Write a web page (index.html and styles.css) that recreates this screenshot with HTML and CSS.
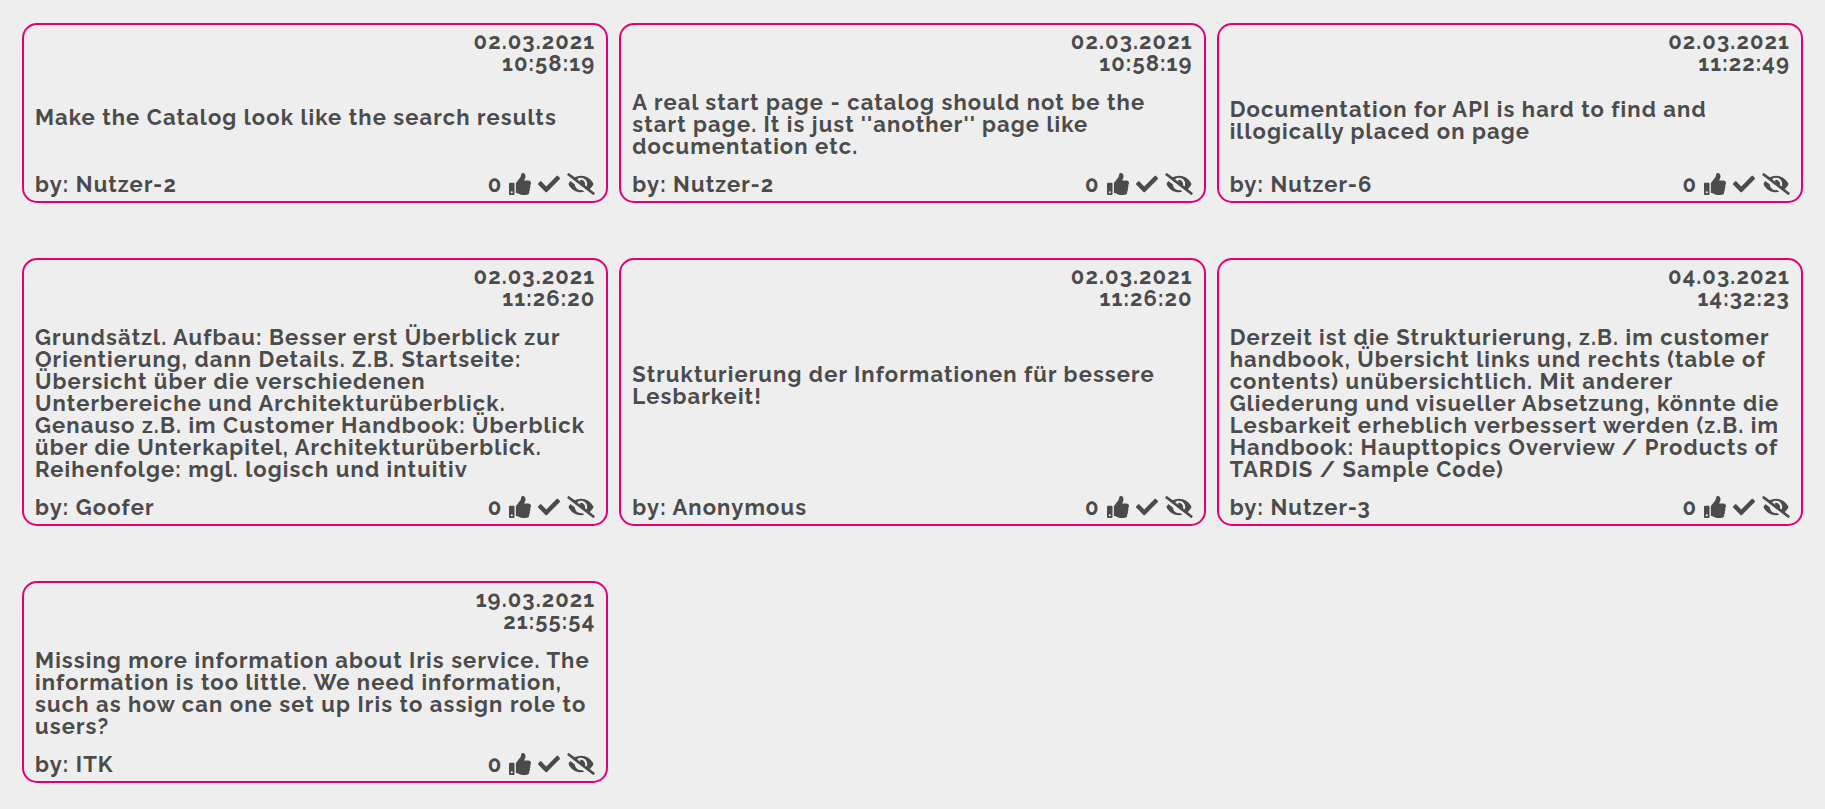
FILE: index.html
```
<!DOCTYPE html>
<html lang="en">
<head>
<meta charset="utf-8">
<title>Feedback</title>
<link rel="stylesheet" href="styles.css">
</head>
<body>
<svg class="sprite" aria-hidden="true">
  <symbol id="thumb" viewBox="0 0 512 512"><path d="M104 224H24c-13.255 0-24 10.745-24 24v240c0 13.255 10.745 24 24 24h80c13.255 0 24-10.745 24-24V248c0-13.255-10.745-24-24-24zM64 472c-13.255 0-24-10.745-24-24s10.745-24 24-24 24 10.745 24 24-10.745 24-24 24zM384 81.452c0 42.416-25.97 66.208-33.277 94.548h101.723c33.397 0 59.397 27.746 59.553 58.098.084 17.938-7.546 37.249-19.439 49.197l-.11.11c9.836 23.337 8.237 56.037-9.308 79.469 8.681 25.895-.069 57.704-16.382 74.757 4.298 17.598 2.244 32.575-6.148 44.632C440.202 511.587 389.616 512 346.839 512l-2.845-.001c-48.287-.017-87.806-17.598-119.56-31.725-15.957-7.099-36.821-15.887-52.651-16.178-6.54-.12-11.783-5.457-11.783-11.998v-213.77c0-3.2 1.282-6.271 3.558-8.521 39.614-39.144 56.648-80.587 89.117-113.111 14.804-14.832 20.188-37.236 25.393-58.902C282.515 39.293 291.817 0 312 0c24 0 72 8 72 81.452z"/></symbol>
  <symbol id="check" viewBox="0 0 512 512"><path d="M173.898 439.404l-166.4-166.4c-9.997-9.997-9.997-26.206 0-36.204l36.203-36.204c9.997-9.998 26.207-9.998 36.204 0L192 312.69 432.095 72.596c9.997-9.997 26.207-9.997 36.204 0l36.203 36.204c9.997 9.997 9.997 26.206 0 36.204l-294.4 294.401c-9.998 9.997-26.207 9.997-36.204-.001z"/></symbol>
  <symbol id="hide" viewBox="0 0 640 512"><path d="M320 400c-75.85 0-137.25-58.71-142.9-133.11L72.2 185.82c-13.79 17.3-26.48 35.59-36.72 55.59a32.35 32.35 0 0 0 0 29.19C89.71 376.41 197.07 448 320 448c26.91 0 52.87-4 77.89-10.46L346 397.39a144.13 144.13 0 0 1-26 2.61zm313.82 58.1l-110.55-85.44a331.25 331.25 0 0 0 81.25-102.07 32.35 32.35 0 0 0 0-29.19C550.29 135.59 442.93 64 320 64a308.15 308.15 0 0 0-147.32 37.7L45.46 3.37A16 16 0 0 0 23 6.18L3.37 31.45A16 16 0 0 0 6.18 53.9l588.36 454.73a16 16 0 0 0 22.46-2.81l19.64-25.27a16 16 0 0 0-2.82-22.45zm-183.72-142l-39.3-30.38A94.75 94.75 0 0 0 416 256a94.76 94.76 0 0 0-121.31-92.21A47.65 47.65 0 0 1 304 192a46.64 46.64 0 0 1-1.54 10l-73.61-56.89A142.31 142.31 0 0 1 320 112a143.92 143.92 0 0 1 144 144c0 21.63-5.29 41.79-13.9 60.11z"/></symbol>
</svg>
<main class="board">
  <article class="card">
    <time class="date">02.03.2021<br>10:58:19</time>
    <p class="text">Make the Catalog look like the search results</p>
    <footer class="foot"><span class="author">by: Nutzer-2</span><span class="votes">0</span><button class="action" aria-label="Like"><svg class="icon"><use href="#thumb"/></svg></button><button class="action" aria-label="Done"><svg class="icon"><use href="#check"/></svg></button><button class="action" aria-label="Hide"><svg class="icon icon-wide"><use href="#hide"/></svg></button></footer>
  </article>
  <article class="card">
    <time class="date">02.03.2021<br>10:58:19</time>
    <p class="text">A real start page - catalog should not be the start page. It is just ''another'' page like documentation etc.</p>
    <footer class="foot"><span class="author">by: Nutzer-2</span><span class="votes">0</span><button class="action" aria-label="Like"><svg class="icon"><use href="#thumb"/></svg></button><button class="action" aria-label="Done"><svg class="icon"><use href="#check"/></svg></button><button class="action" aria-label="Hide"><svg class="icon icon-wide"><use href="#hide"/></svg></button></footer>
  </article>
  <article class="card">
    <time class="date">02.03.2021<br>11:22:49</time>
    <p class="text">Documentation for API is hard to find and illogically placed on page</p>
    <footer class="foot"><span class="author">by: Nutzer-6</span><span class="votes">0</span><button class="action" aria-label="Like"><svg class="icon"><use href="#thumb"/></svg></button><button class="action" aria-label="Done"><svg class="icon"><use href="#check"/></svg></button><button class="action" aria-label="Hide"><svg class="icon icon-wide"><use href="#hide"/></svg></button></footer>
  </article>
  <article class="card">
    <time class="date">02.03.2021<br>11:26:20</time>
    <p class="text" lang="de">Grundsätzl. Aufbau: Besser erst Überblick zur Orientierung, dann Details. Z.B. Startseite: Übersicht über die verschiedenen Unterbereiche und Architekturüberblick. Genauso z.B. im Customer Handbook: Überblick über die Unterkapitel, Architekturüberblick. Reihenfolge: mgl. logisch und intuitiv</p>
    <footer class="foot"><span class="author">by: Goofer</span><span class="votes">0</span><button class="action" aria-label="Like"><svg class="icon"><use href="#thumb"/></svg></button><button class="action" aria-label="Done"><svg class="icon"><use href="#check"/></svg></button><button class="action" aria-label="Hide"><svg class="icon icon-wide"><use href="#hide"/></svg></button></footer>
  </article>
  <article class="card">
    <time class="date">02.03.2021<br>11:26:20</time>
    <p class="text" lang="de">Strukturierung der Informationen für bessere Lesbarkeit!</p>
    <footer class="foot"><span class="author">by: Anonymous</span><span class="votes">0</span><button class="action" aria-label="Like"><svg class="icon"><use href="#thumb"/></svg></button><button class="action" aria-label="Done"><svg class="icon"><use href="#check"/></svg></button><button class="action" aria-label="Hide"><svg class="icon icon-wide"><use href="#hide"/></svg></button></footer>
  </article>
  <article class="card">
    <time class="date">04.03.2021<br>14:32:23</time>
    <p class="text" lang="de">Derzeit ist die Strukturierung, z.B. im customer handbook, Übersicht links und rechts (table of contents) unübersichtlich. Mit anderer Gliederung und visueller Absetzung, könnte die Lesbarkeit erheblich verbessert werden (z.B. im Handbook: Haupttopics Overview / Products of TARDIS / Sample Code)</p>
    <footer class="foot"><span class="author">by: Nutzer-3</span><span class="votes">0</span><button class="action" aria-label="Like"><svg class="icon"><use href="#thumb"/></svg></button><button class="action" aria-label="Done"><svg class="icon"><use href="#check"/></svg></button><button class="action" aria-label="Hide"><svg class="icon icon-wide"><use href="#hide"/></svg></button></footer>
  </article>
  <article class="card">
    <time class="date">19.03.2021<br>21:55:54</time>
    <p class="text">Missing more information about Iris service. The information is too little. We need information, such as how can one set up Iris to assign role to users?</p>
    <footer class="foot"><span class="author">by: ITK</span><span class="votes">0</span><button class="action" aria-label="Like"><svg class="icon"><use href="#thumb"/></svg></button><button class="action" aria-label="Done"><svg class="icon"><use href="#check"/></svg></button><button class="action" aria-label="Hide"><svg class="icon icon-wide"><use href="#hide"/></svg></button></footer>
  </article>
</main>
</body>
</html>
```
FILE: styles.css
```
* { box-sizing: border-box; }
body {
  margin: 0;
  background: #eee;
  color: #4b4b4b;
  font: 700 22px/22px Raleway, "Open Sans", sans-serif;
  letter-spacing: 0.05em;
}
.sprite { position: absolute; width: 0; height: 0; }
.board {
  display: grid;
  grid-template-columns: repeat(3, minmax(0, 1fr));
  gap: 55px 11px;
  padding: 23px 22px;
}
.card {
  display: grid;
  row-gap: 16px;
  padding: 5px 11px 6px;
  border: 2px solid #e20074;
  border-radius: 15px;
}
.date {
  padding-bottom: 1px;
  text-align: right;
}
.text { margin: 0; }
.foot {
  display: flex;
  align-self: end;
  align-items: center;
  gap: 7px;
}
.author { flex: 1; }
.action {
  display: flex;
  padding: 0;
  border: 0;
  background: none;
  color: inherit;
  cursor: pointer;
}
.icon { width: 22px; height: 22px; fill: currentColor; }
.icon-wide { width: 28px; }
```
